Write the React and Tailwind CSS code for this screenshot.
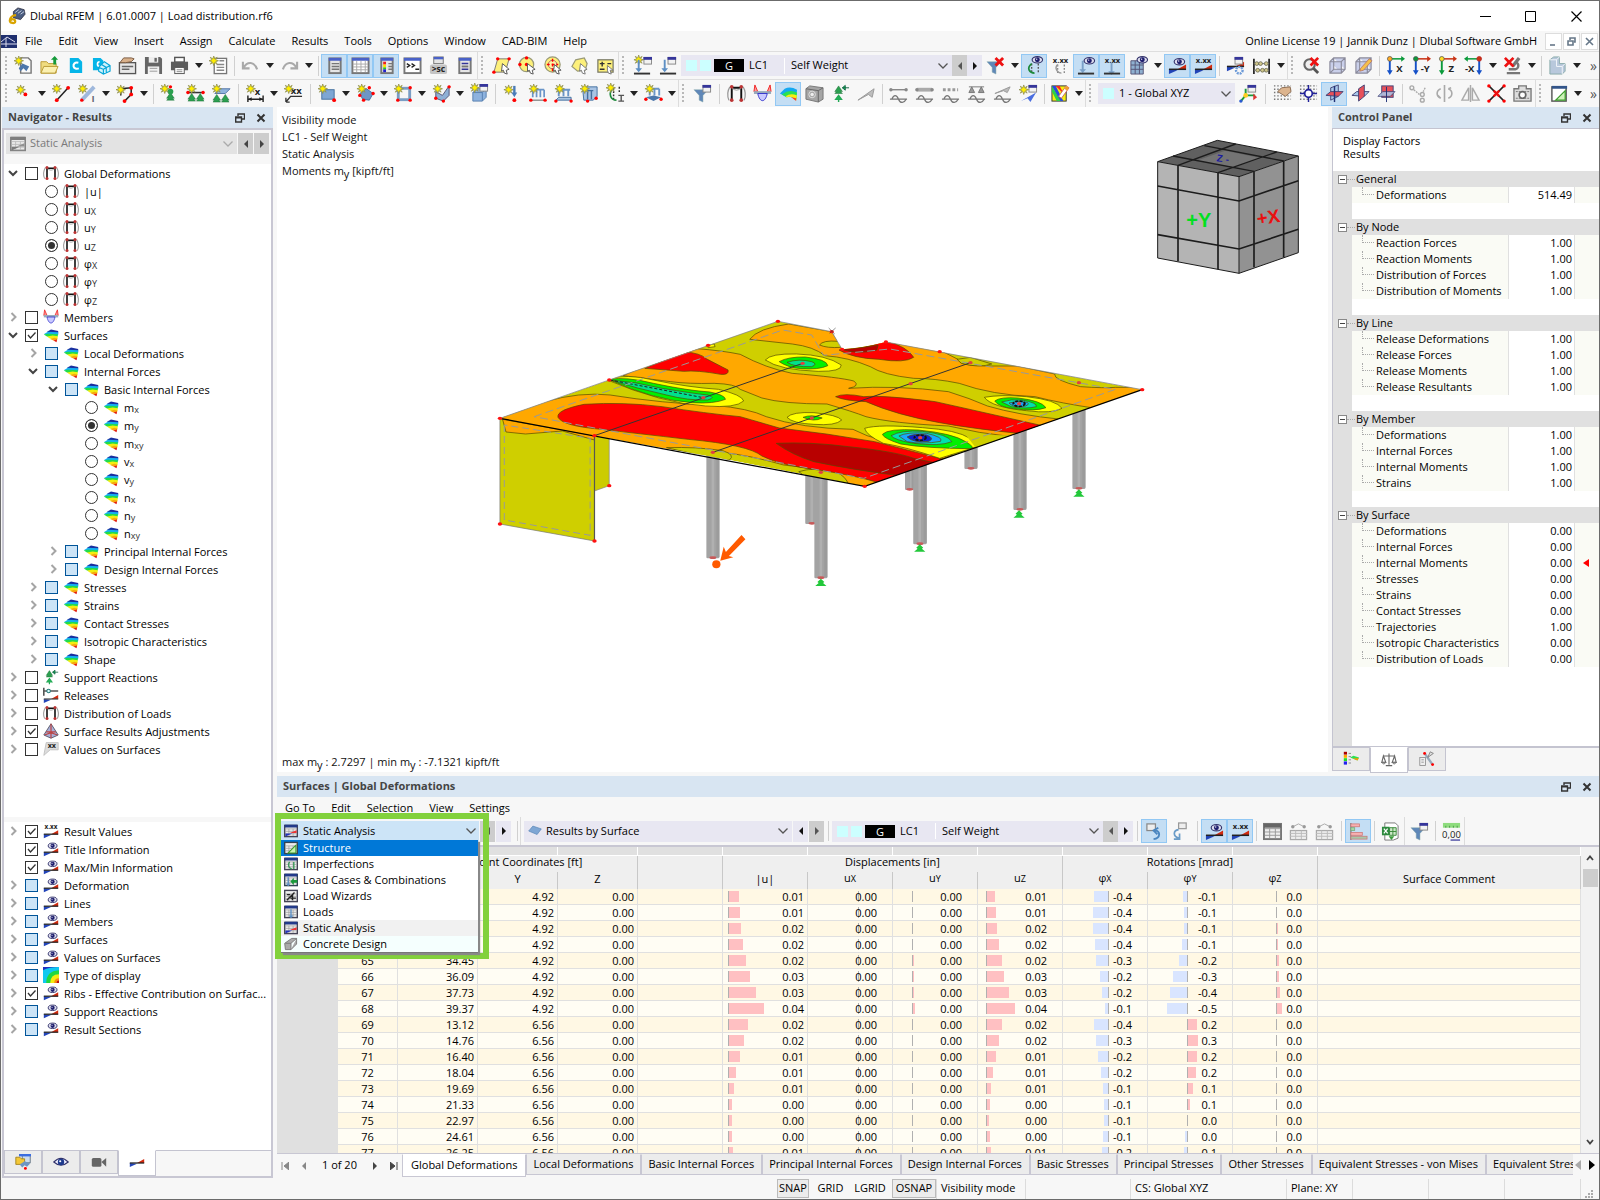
import React from "react";

/* ---------- small drawing parts shared by the icons ---------- */
const Star = ({ x = 5, y = 5 }) => (
  <path
    transform={`translate(${x} ${y})`}
    d="M0-5 1-2 3.6-3.6 2-1 5 0 2 1 3.6 3.6 1 2 0 5-1 2-3.6 3.6-2 1-5 0-2-1-3.6-3.6-1-2Z"
    fill="#ffee00"
    stroke="#8a8a55"
    strokeWidth=".8"
  />
);
const Dot = ({ x, y, c = "#f00", r = 1.8 }) => <circle cx={x} cy={y} r={r} fill={c} />;
const Win = ({ x = 10, y = 1 }) => (
  <g transform={`translate(${x} ${y})`}>
    <rect x=".5" y=".5" width="8" height="7" fill="#f2f2f2" stroke="#888" />
    <rect width="9" height="3" fill="#35359a" />
  </g>
);
const Eye = ({ x = 13, y = 4 }) => (
  <g transform={`translate(${x} ${y})`}>
    <ellipse rx="5.5" ry="3.4" fill="#dde" stroke="#33336b" strokeWidth="1.2" />
    <circle r="2.6" fill="#1e1e6e" />
    <circle cx="-.7" cy="-.7" r=".7" fill="#fff" />
  </g>
);
const Flow = ({ y = 14 }) => (
  <g transform={`translate(0 ${y})`}>
    <path d="M1 0V5L10 1Z" fill="#2244b8" />
    <path d="M19 0V-5L10 0Z" fill="#d22a0e" />
    <path d="M1 0H19" stroke="#222" strokeWidth="1.6" />
  </g>
);
const XX = ({ t = "x.xx", x = 10, y = 7, c = "#222", s = 8 }) => (
  <text x={x} y={y} textAnchor="middle" fontSize={s} fontWeight="bold" fill={c} fontFamily="Open Sans, sans-serif">{t}</text>
);
const Curve = ({ c = "#777" }) => <path d="M1 16H19M3 16C5 11 8 11 10 16S16 20 18 16" fill="none" stroke={c} strokeWidth="1.4" />;
const Dots = ({ c = "#777" }) => (
  <path d="M1 2H19M1 5.5H19M1 9H19M1 12.500H19M1 16H19" stroke={c} strokeWidth="1.5" strokeDasharray="1.5 2" />
);
const Funnel = ({ c = "#5f87b8" }) => <path d="M1 6H16L10.500 12V19L6.500 17V12Z" fill={c} stroke="#8aa" strokeWidth=".5" />;
const Down = ({ x = 7, c = "#5d8fc4", y = 0 }) => <path d={`M${x - 1} ${y + 3}h2v9h2.500l-3.500 4-3.500-4h2.500Z`} fill={c} />;
const Green = ({ x, y }) => <path d={`M${x} ${y}l4 6h-2l2 2h-8l2-2h-2Z`} fill="#2ba04f" stroke="#156b30" strokeWidth=".5" />;
const Axes = ({ c, a, b, l, flip }) => (
  <>
    <path d={flip ? "M16 3H3" : "M4 3H17"} stroke={a} strokeWidth="1.6" />
    <path d={flip ? "M0 3l4-3v6Z" : "M20 3l-4-3v6Z"} fill={a} />
    <path d={flip ? "M16 3V16" : "M4 3V16"} stroke={b} strokeWidth="2" />
    <path d={flip ? "M16 20l-3-5h6Z" : "M4 20l-3-5h6Z"} fill={b} />
    <circle cx={flip ? 16 : 4} cy="3" r="2.500" fill={c} stroke={flip ? "#b22" : "#555"} strokeWidth=".8" />
    <XX t={l} x={flip ? 6 : 14} y={17} s={10} />
  </>
);
const Cube = ({ f = "#c9cfea" }) => (
  <path d="M2 6 6 2H18V14L14 18H2ZM2 6H14V18M14 6 18 2M6 2V14H18M6 14 2 18" fill={f} stroke="#8a8a9a" strokeWidth="1.2" />
);
const Grid = ({ c = "#777", children }) => (
  <>
    <rect x="1" y="2" width="18" height="16" fill="#eee" stroke={c} strokeWidth="2" />
    <path d="M2 7H18M2 10.500H18M2 14H18M7 7V17M13 7V17" stroke="#999" />
    {children}
  </>
);

/* rainbow surface strip used all over the results tree */
const Rainbow = () => (
  <>
    <path d="M5 6 10 3 19 5V8L10 8Z" fill="#1a2fa0" />
    <path d="M1 9 6 6 19 6.500V10L10 11Z" fill="#14b0f0" />
    <path d="M1 9.500 6 8.500 18.500 9V12L10 13.500 5 12Z" fill="#22dc4a" />
    <path d="M5 12 12 10.500 18.500 11.500 18 15 12 15.500 8 14Z" fill="#f2ee10" />
    <path d="M9 15 14 13.500 18 14.500 17.500 17 13 17Z" fill="#f8a810" />
    <path d="M13 17 17.500 15.500 17 19Z" fill="#e21a10" />
  </>
);
const Frame = () => (
  <>
    <path d="M3 3C0 8 0 12 2 17M17 3C20 8 20 12 18 17" fill="none" stroke="#999" strokeWidth="1.3" />
    <path d="M5 17V4H15V17" fill="none" stroke="#111" strokeWidth="2" />
    <path d="M5 4Q10 9 15 4" fill="none" stroke="#999" />
    <Dot x={5} y={3} r={1.900} c="#b33" /><Dot x={15} y={3} r={1.900} c="#b33" /><Dot x={5} y={17} r={1.900} c="#b33" /><Dot x={15} y={17} r={1.900} c="#b33" />
  </>
);
const Memb = () => (
  <>
    <path d="M1 8 2 1 5 8ZM19 8 18 1 15 8Z" fill="#f99" stroke="#e22" />
    <path d="M1 9H19" stroke="#9ab" strokeWidth="3" />
    <path d="M5 10C7 20 13 20 15 10Z" fill="#c9c9ff" stroke="#33c" />
  </>
);
const Support = () => (
  <>
    <Green x={8} y={2} />
    <path d="M12 4h7M12 4l3-2.500v5Z" fill="#2c6" stroke="#164" strokeWidth="1" />
    <path d="M8 19V14M8 12l-3 4h6Z" fill="#2c6" stroke="#2a5" strokeWidth="1.5" />
  </>
);

const ICONS = {
  logo: (<><path d="M6 5 11 1 18 3 19 8 14 14 6 12Z" fill="#4b5d80" stroke="#223" strokeWidth=".8" /><path d="M8 6 12 3M11 7 15 4M14 8 18 5" stroke="#cdd8ea" /><path d="M9 9C5 9 2 12 2 15S8 19 8 16 4 13 3 15" fill="none" stroke="#d9a400" strokeWidth="2.500" /></>),
  new: (<><path d="M7 2H15L18 5V18H7Z" fill="#fafafa" stroke="#777" strokeWidth="1.5" /><Star x={5} y={5} /><path d="M5 13 9 8 16 11 13 16 10 13 7 16Z" fill="#4b76ab" /></>),
  open: (<><path d="M1 6H7L9 8H17V18H1Z" fill="#f0dc80" stroke="#b99a35" /><path d="M1 18 4 11H19L16 18Z" fill="#fbf0b0" stroke="#b99a35" /><path d="M14 9V4H11.500L15.500 0 19 4H17V9Z" fill="#149a3a" /></>),
  cblue: (<><path d="M4 2H13L17 6V18H4Z" fill="#05b5e8" /><path d="M13 7C9 6 7.500 9 8 11S11 14 13.500 13" fill="none" stroke="#fff" strokeWidth="2.200" /></>),
  ccube: (<><path d="M1 2H9L12 5V15H1Z" fill="#05b5e8" /><path d="M8 6C5 6 5 11 8 11" fill="none" stroke="#fff" strokeWidth="1.700" /><path d="M7 12 13 6 19 10V16L12 19 7 16ZM7 12 12 14V19M12 14 19 10M10 9 15 12V18" fill="#cff3fc" stroke="#05a5d8" strokeWidth="1.200" /></>),
  inbox: (<><rect x="1.500" y="7" width="17" height="11.500" fill="#e8e8e8" stroke="#555" strokeWidth="1.400" /><path d="M4 11H16M4 14H12" stroke="#666" strokeWidth="1.500" /><path d="M2 7 6 2H14L17 3 14 6 8 7Z" fill="#d8b08a" stroke="#7a5a40" /></>),
  save: (<><path d="M1 1H17L19 3V19H1Z" fill="#666" /><rect x="5" y="1" width="10" height="6" fill="#eee" /><rect x="11" y="2" width="2.500" height="4" fill="#666" /><rect x="4" y="11" width="12" height="8" fill="#f3f3f3" /><path d="M6 13H14M6 16H14" stroke="#999" /></>),
  print: (<><rect x="5" y="1.500" width="10" height="5" fill="#fff" stroke="#555" strokeWidth="1.500" /><rect x="1" y="6" width="18" height="9" fill="#5c5c5c" /><rect x="5" y="12" width="10" height="6.500" fill="#fff" stroke="#555" /><path d="M7 14.500H13M7 16.500H13" stroke="#888" /></>),
  report: (<><rect x="5.500" y="2.500" width="13" height="16" fill="#fff" stroke="#777" strokeWidth="1.400" /><path d="M8 9H16M8 12H16M8 15H16M11 5H16" stroke="#888" strokeWidth="1.500" /><Star x={5} y={5} /></>),
  undo: <path d="M2 6V13H9M2.500 12.500C7 5 14 6 17 14" fill="none" stroke="#a9a9a9" strokeWidth="2.200" />,
  redo: <path d="M18 6V13H11M17.500 12.500C13 5 6 6 3 14" fill="none" stroke="#a9a9a9" strokeWidth="2.200" />,
  panA: (<><rect x="4.500" y="2.500" width="12" height="15.500" fill="#e5e5e5" stroke="#777" strokeWidth="2" /><rect x="4" y="2" width="13" height="3" fill="#4a62c8" /><path d="M7 8H15M7 11H15M7 14H15" stroke="#777" strokeWidth="1.500" /></>),
  panB: (<><rect x="1.500" y="2.500" width="17" height="15.500" fill="#fff" stroke="#777" strokeWidth="2" /><rect x="1" y="2" width="18" height="3" fill="#4a62c8" /><path d="M2 8.500H18M2 11.500H18M2 14.500H18M6 5V17M10.500 5V17M15 5V17" stroke="#aaa" /></>),
  panC: (<><rect x="4.500" y="2.500" width="12" height="15.500" fill="#e5e5e5" stroke="#777" strokeWidth="2" /><rect x="4" y="2" width="13" height="3" fill="#4a62c8" /><path d="M8 6V9" stroke="#e22" strokeWidth="3" /><path d="M8 9V12" stroke="#fd0" strokeWidth="3" /><path d="M8 12V14" stroke="#2c2" strokeWidth="3" /><path d="M8 14V17" stroke="#22c" strokeWidth="3" /><path d="M12 8H16M12 11H16M12 14H16" stroke="#777" strokeWidth="1.500" /></>),
  cons: (<><rect x="1.500" y="2.500" width="17" height="15.500" fill="#fff" stroke="#777" strokeWidth="2" /><rect x="1" y="2" width="18" height="3" fill="#4a62c8" /><path d="M4 8 7 10 4 12M9 8 12 10 9 12M13 14H17" fill="none" stroke="#222" strokeWidth="1.500" /></>),
  sc: (<><rect x="5" y="1" width="10" height="7" fill="#e5e5e5" stroke="#777" /><rect x="5" y="1" width="10" height="2.500" fill="#4a62c8" /><rect x="1" y="9" width="18" height="10" rx="2" fill="#c4c4c4" /><XX t=">sc" y={17} s={9} /></>),
  panD: (<><rect x="4.500" y="2.500" width="12" height="15.500" fill="#e5e5e5" stroke="#777" strokeWidth="2" /><rect x="4" y="2" width="13" height="3" fill="#4a62c8" /><path d="M7 8H14M7 14H14" stroke="#35359a" strokeWidth="1.600" /><path d="M7 11H14" stroke="#777" strokeWidth="2" /></>),
  selA: (<><path d="M2 17 6 3H18L14 17Z" fill="#fdf07a" stroke="#777" /><Dot x={2} y={17} /><Dot x={6} y={3} /><Dot x={18} y={3} /><path d="M11 8 18 14 15 15 16 19 13 18 12 15 10 16Z" fill="#fff" stroke="#555" /></>),
  selB: (<><circle cx="9" cy="9" r="7.500" fill="#fdf07a" stroke="#997" strokeWidth="1.300" /><Dot x={9} y={2} /><Dot x={2} y={9} /><Dot x={9} y={9} /><path d="M10 8 18 14 15 15 16 19 13 18 12 15 10 16Z" fill="#fff" stroke="#555" /></>),
  selC: (<><circle cx="9" cy="9" r="8" fill="#fdf07a" stroke="#997" strokeWidth="1.300" /><circle cx="9" cy="9" r="4.500" fill="#fff6a8" stroke="#a66" /><path d="M9 3V16M3 9H15" stroke="#f00" strokeWidth="1.500" strokeDasharray="3 2" /><path d="M11 9 18 15 15 15 16 19 13 18 12 15 10 16Z" fill="#fff" stroke="#555" /></>),
  selD: (<><path d="M2 11 6 4 15 2 18 8 16 15 8 16Z" fill="#fdf07a" stroke="#997" strokeWidth="1.300" /><path d="M11 8 18 14 15 15 16 19 13 18 12 15 10 16Z" fill="#fff" stroke="#777" /></>),
  selE: (<><rect x="2" y="4" width="16" height="13" fill="#fdf07a" stroke="#776" strokeWidth="1.300" /><path d="M4 8H9M6.500 6V11M4 14H9M12 8H16" stroke="#333" strokeWidth="1.500" /><path d="M12 10 18 15 15 15 16 19 13 18 12 15Z" fill="#fff" stroke="#777" /></>),
  ldA: (<><Star x={6} y={4} /><Win x={11} y={1} /><Down x={6} y={1} /><path d="M1 18.500H18" stroke="#333" strokeWidth="2" /></>),
  ldB: (<><Win x={9} y={1} /><Down x={6} y={1} /><path d="M1 18.500H18" stroke="#333" strokeWidth="2" /></>),
  filtX: (<><Funnel /><path d="M10 2 18 10M18 2 10 10" stroke="#e11" strokeWidth="3" /></>),
  rsEye: (<><path d="M7 8V18M14 8V18" stroke="#555" strokeWidth="1.400" strokeDasharray="2 1.500" /><path d="M7 8C1 13 5 18 10 18" fill="none" stroke="#1c8a3a" strokeWidth="1.800" /><Eye /></>),
  rsX: (<><XX /><path d="M7 9V19M14 9V19" stroke="#888" strokeWidth="1.400" strokeDasharray="2 1.500" /><path d="M7 9C3 13 7 18 11 18" fill="none" stroke="#999" strokeWidth="1.500" /></>),
  dnEye: (<><Down x={6} y={2} c="#7aa0c8" /><path d="M1 18.500H18" stroke="#333" strokeWidth="2" /><Eye x={13} y={5} /></>),
  dnX: (<><XX /><Down x={9} y={4} c="#7aa0c8" /><path d="M1 18.500H18" stroke="#333" strokeWidth="2" /></>),
  gridEye: (<><path d="M2 5H15V19H2ZM2 9.500H15M2 14H15M6.500 5V19M11 5V19" fill="#8fb0d0" stroke="#557" /><Eye x={14} y={4} /></>),
  resEye: (<><Eye x={12} y={6} /><Flow y={14} /></>),
  resX: (<><XX /><Flow y={14} /></>),
  resWin: (<><Flow y={11} /><Win x={9} y={1} /><circle cx="14" cy="15" r="3.500" fill="none" stroke="#6d9bd8" strokeWidth="2.500" strokeDasharray="2 1" /></>),
  abacus: (<><path d="M2 3V19M18 3V19" stroke="#222" strokeWidth="1.800" /><path d="M2 8H18M2 15H18" stroke="#777" /><g fill="#cfc68a" stroke="#554" strokeWidth=".7"><circle cx="5" cy="8" r="2" /><circle cx="9" cy="8" r="2" /><circle cx="15" cy="8" r="2" /><circle cx="6" cy="15" r="2" /><circle cx="11" cy="15" r="2" /><circle cx="15" cy="15" r="2" /></g></>),
  zoomX: (<><circle cx="8" cy="9" r="5.500" fill="#eee" stroke="#666" strokeWidth="2.200" /><path d="M12 13 17 18" stroke="#555" strokeWidth="3" /><path d="M9 2 17 10M17 2 9 10" stroke="#e11" strokeWidth="2.800" /></>),
  cube: <Cube />,
  cubeP: (<><Cube /><path d="M7 13 16 3 19 5 10 15 6 16Z" fill="#f5c04a" stroke="#a66" strokeWidth=".7" /></>),
  axX: <Axes c="#fa2" a="#0a9a3a" b="#1450c8" l="X" />,
  axY: <Axes c="#0a9a3a" a="#c83214" b="#1450c8" l="-Y" />,
  axZ: <Axes c="#fd2" a="#c83214" b="#0a9a3a" l="Z" />,
  axmX: <Axes c="#c83214" a="#0a9a3a" b="#1450c8" l="-X" flip />,
  micX: (<><path d="M4 18H18M6 14H13C17 13 17 8 14 7" fill="none" stroke="#777" strokeWidth="2.500" /><path d="M10 11 17 2" stroke="#777" strokeWidth="3.500" /><path d="M2 2 11 11M11 2 2 11" stroke="#e11" strokeWidth="2.800" /></>),
  steps: (<><path d="M2 4 6 1H12V8H18V16L15 19H2Z" fill="#b8c8dc" stroke="#8aa" /><path d="M2 4H9V11H15V19M9 4 12 1M15 11 18 8" fill="none" stroke="#f3f7fb" /></>),
  nNode: (<><Star x={7} y={6} /><Dot x={12} y={11} r={2} /></>),
  nLine: (<><path d="M5 17 17 4" stroke="#222" strokeWidth="1.600" /><Star x={5} y={5} /><Dot x={5} y={17} r={2} /><Dot x={17} y={4} r={2} /></>),
  nMem: (<><path d="M4 17 17 3" stroke="#9fb8dc" strokeWidth="4" /><Star x={5} y={5} /><Dot x={4} y={17} /><XX t="I" x={16} y={19} s={10} c="#667" /></>),
  nPoly: (<><path d="M5 12 5 5 16 4 16 11 9 18" fill="none" stroke="#222" strokeWidth="1.600" /><Star x={5} y={6} /><Dot x={16} y={4} r={2} /><Dot x={16} y={11} r={2} /><Dot x={9} y={18} r={2} /></>),
  nSup: (<><Green x={11} y={9} /><circle cx="11" cy="8" r="3" fill="#2ba04f" /><Star x={5} y={5} /><Dot x={11} y={3} /></>),
  nSupL: (<><path d="M3 9H18" stroke="#333" strokeWidth="1.600" /><Green x={6} y={10} /><Green x={15} y={10} /><Star x={6} y={5} /><Dot x={2} y={9} /><Dot x={18} y={9} /></>),
  nSupS: (<><path d="M3 10 8 5H19L14 10Z" fill="#8fb4dc" stroke="#57a" /><Green x={5} y={11} /><Green x={14} y={11} /><Star x={5} y={5} /></>),
  nDim: (<><path d="M2 12V19M18 12V19M2 16H18" stroke="#222" strokeWidth="1.500" /><path d="M2 16l4-2v4ZM18 16l-4-2v4Z" fill="#222" /><XX t="x" x={12} y={12} s={10} /><Star x={5} y={5} /></>),
  nXX: (<><XX t="xx" x={13} y={11} s={10} /><path d="M19 13H7L2 19M2 19V14.500M2 19H6" fill="none" stroke="#333" strokeWidth="1.400" /><Star x={5} y={5} /></>),
  nSurf: (<><rect x="4" y="6" width="13" height="10" fill="#7ea6d4" stroke="#46719f" /><Star x={5} y={5} /><Dot x={17} y={17} r={2} /></>),
  nSurfB: (<><path d="M4 10 11 5 18 10 14 17 7 16Z" fill="#6d96c4" stroke="#46719f" /><Star x={6} y={5} /><Dot x={18} y={10} /><Dot x={8} y={17} /><Dot x={14} y={4} /><Dot x={4} y={12} /></>),
  nOpen: (<><rect x="4.500" y="4.500" width="12" height="12" fill="none" stroke="#7a9dc4" strokeWidth="3" /><Star x={5} y={5} /><Dot x={17} y={4} /><Dot x={17} y={17} /><Dot x={4} y={17} /></>),
  nSolid: (<><path d="M4 8 11 12 18 2V12L12 18 4 15Z" fill="#8fb0d6" stroke="#557" /><Star x={6} y={5} /><Dot x={18} y={3} /><Dot x={12} y={18} /><Dot x={4} y={15} /></>),
  nBox: (<><path d="M3 9 7 5H17V14L13 18H3ZM3 9H13V18M13 9 17 5" fill="#8db2de" stroke="#567fb0" /><Star x={5} y={4} /><Win x={10} y={0} /></>),
  nLdN: (<><Star x={7} y={6} /><path d="M13 2V10" stroke="#4a7cb8" strokeWidth="2.500" /><path d="M13 14l-3-5h6Z" fill="#4a7cb8" /><Dot x={13} y={17} r={2} /></>),
  nLdL: (<><path d="M4 6H17M5 6V14M9 6V14M13 6V14M17 6V14" stroke="#6a95c8" strokeWidth="1.800" /><path d="M3 17H18" stroke="#555" /><Star x={6} y={5} /><Dot x={3} y={17} /><Dot x={18} y={17} /></>),
  nLdS: (<><path d="M3 6H17M5 6V13M10 6V13M15 6V13" stroke="#6a95c8" strokeWidth="2" /><path d="M2 17 5 14H18V17Z" fill="#a9c4e4" stroke="#46719f" /><Star x={6} y={5} /><Dot x={2} y={18} /><Dot x={18} y={18} /></>),
  nLdV: (<><path d="M3 7 8 3H18V13L14 17H4Z" fill="#a9c4e4" stroke="#46719f" /><path d="M8 7V16M12 7V16M3 7H14" stroke="#46719f" strokeWidth="1.500" /><Star x={5} y={5} /><Dot x={8} y={18} /><Dot x={17} y={15} /></>),
  nImp: (<><path d="M8 4V17M14 3V10" stroke="#333" strokeWidth="1.500" strokeDasharray="2 1.500" /><path d="M7 5C2 10 5 17 11 17" fill="none" stroke="#1c8a3a" strokeWidth="1.800" /><Star x={5} y={4} /><path d="M13 12H19M13 18H19M16 12V18" stroke="#555" strokeWidth="1.500" /></>),
  nLdF: (<><path d="M5 5H16M6 5V12M11 5V12M16 5V12" stroke="#6a95c8" strokeWidth="2" /><path d="M2 14 10 12 18 14 10 18Z" fill="#4b76ab" /><Star x={6} y={5} /><Dot x={2} y={16} /><Dot x={18} y={16} /></>),
  filtW: (<><Funnel /><Win x={10} y={1} /></>),
  frame: <Frame />,
  memb: <Memb />,
  rain: <Rainbow />,
  rainB: (<><path d="M1 10 6 5Q12 2 19 6L18 16Q13 12 8 14Z" fill="#14a8f0" /><path d="M3 11Q11 5 19 9L18 17Q13 12 8 14Z" fill="#2be052" /><path d="M7 13Q12 9 19 12L18 17Q13 12 8 14Z" fill="#f6ee10" /><path d="M13 14 18 15V18Z" fill="#f42" /></>),
  brick: (<><path d="M1 5 5 2 19 4V16L14 19 1 16Z" fill="#a5a5a5" stroke="#777" /><path d="M1 5 14 7V19M14 7 19 4" stroke="#666" fill="none" /><circle cx="7.500" cy="11" r="3.500" fill="none" stroke="#ddd" /><Dot x={7.500} y={11} c="#eee" /></>),
  sup: <Support />,
  wing: (<path d="M1 17 18 5 16 14 12 11Z" fill="#bdbdbd" stroke="#999" />),
  cvA: (<><path d="M2 6H18" stroke="#888" strokeWidth="1.500" /><Dot x={2} y={6} c="#888" /><Dot x={18} y={6} c="#888" /><Curve /></>),
  cvB: (<><path d="M2 6H18" stroke="#aaa" strokeWidth="4" /><Dot x={2} y={6} c="#888" /><Dot x={18} y={6} c="#888" /><Curve /></>),
  cvC: (<><path d="M2 6H18" stroke="#999" strokeWidth="3" strokeDasharray="3 2" /><Curve /></>),
  cvD: (<><path d="M2 3H18M5 3 2 9H8ZM15 3 12 9H18Z" stroke="#777" fill="#999" /><Curve /></>),
  cvE: (<><path d="M2 10 18 3 15 9 11 7Z" fill="#bbb" stroke="#999" /><Curve /></>),
  cvF: (<><Win x={10} y={1} /><path d="M2 18 18 9 12 19 9 15Z" fill="#4a6ee0" /><Star x={5} y={6} /></>),
  color: (<><rect x="1" y="2" width="15" height="16" fill="#f6ee10" stroke="#333" /><path d="M1 2H5L13 18H9Z" fill="#2b4ae0" /><path d="M1 2V8L6 18H10Z" fill="#2ad04a" /><path d="M5 2H9L14 11 9 6Z" fill="#f22" /><path d="M8 13 16 2 19 4 11 15Z" fill="#fff" stroke="#c66" /><path d="M16 2 19 4 17 7 14 5Z" fill="#f0a030" /></>),
  ucs: (<><Win x={9} y={1} /><path d="M7 12V5M7 12H17M7 12 2 18" stroke="#1a9a3a" strokeWidth="2" fill="none" /><path d="M19 14l-4-4v7Z" fill="#d33" /><Dot x={7} y={12} c="#fc2" r={2.500} /><Dot x={2} y={18} c="#2a5ad0" /></>),
  snapH: (<><Dots /><path d="M5 8 9 4 18 3 19 8 13 13Z" fill="#dcb48e" stroke="#8a6a50" /></>),
  snapG: (<><Dots /><path d="M10 1V19M1 10H19" stroke="#22229a" strokeWidth="1.500" /><circle cx="10" cy="10" r="4" fill="#fff" stroke="#22229a" strokeWidth="1.800" /></>),
  plA: (<><path d="M6 4 14 1V13L6 17Z" fill="#a9c8ea" stroke="#447" /><path d="M1 12 6 8H19L14 13Z" fill="#e8505a" stroke="#447" /><path d="M10 2V19" stroke="#237" strokeWidth="1.500" /></>),
  plB: (<><path d="M1 12 6 8H19L14 13Z" fill="#a9c8ea" stroke="#447" /><path d="M8 5 14 1V13L8 18Z" fill="#e8505a" stroke="#447" /></>),
  plC: (<><rect x="5" y="2" width="12" height="12" fill="#e8505a" stroke="#447" /><path d="M1 13 6 8H19L14 13Z" fill="#a9c8ea" stroke="#447" opacity=".85" /><path d="M10 3V19" stroke="#237" /></>),
  nodes: (<><g fill="none" stroke="#aaa" strokeWidth="1.500"><circle cx="3" cy="4" r="2" /><circle cx="14" cy="11" r="2" /><circle cx="14" cy="17" r="2" /><path d="M5 6 11 11M17 4 15 8" strokeDasharray="2 1" /></g></>),
  rot: <path d="M10 1V19M6 5C1 7 1 13 6 15M14 5C19 7 19 13 14 15M6 15l-3-3M14 5l3-1" fill="none" stroke="#aaa" strokeWidth="1.700" />,
  mirror: <path d="M10 1V19M8 4V17H1ZM12 4V17H19Z" fill="none" stroke="#aaa" strokeWidth="1.500" />,
  cross: (<><path d="M2 2 18 18M18 2 2 18" stroke="#222" strokeWidth="1.600" /><Dot x={2} y={2} /><Dot x={18} y={2} /><Dot x={2} y={18} /><Dot x={18} y={18} /><path d="M7 7 13 13M13 7 7 13" stroke="#e11" strokeWidth="2.500" /></>),
  cam: (<><path d="M1 5H6V2H14V5H19V18H1Z" fill="#ddd" stroke="#777" strokeWidth="1.400" /><path d="M3 8H17M3 15H17" stroke="#777" strokeDasharray="2 1" /><circle cx="10" cy="11.500" r="3.500" fill="#fff" stroke="#666" strokeWidth="1.800" /></>),
  tri: (<><rect x="2" y="3" width="15" height="15" fill="#fff" stroke="#555" strokeWidth="1.500" /><rect x="2" y="2" width="16" height="3" fill="#33558a" /><path d="M6 17 16 7V17Z" fill="#cdf3b8" stroke="#3a9a2a" strokeWidth="1.300" /></>),
  /* tree and tab icons */
  rel: (<><path d="M1 1V11M1 5H19" stroke="#555" strokeWidth="2" /><circle cx="7" cy="5" r="2.200" fill="#dff" stroke="#277" strokeWidth="1.300" /><path d="M1 15V20L10 16Z" fill="#2244b8" /><path d="M19 15V10L10 15Z" fill="#d22a0e" /><path d="M1 15H19" stroke="#444" strokeWidth="1.500" /></>),
  adj: (<><path d="M10 1 19 15 10 19 1 15Z" fill="#a9b0d8" stroke="#445" /><path d="M10 1V19M4 11H16M2 15 10 12 18 15" stroke="#b44" fill="none" strokeWidth="1.500" /></>),
  valS: (<><path d="M4 2H19V11H9L1 18Z" fill="#ddd" stroke="#bbb" /><XX t="xx" x={11} y={9} s={9} /></>),
  type: (<><rect width="20" height="20" fill="#2030c0" /><path d="M0 20V4Q8 0 20 0V20Z" fill="#10c8f0" /><path d="M4 20Q4 5 20 4V20Z" fill="#20d840" /><path d="M9 20Q9 9 20 9V20Z" fill="#f4ec10" /><path d="M14 20Q14 14 20 14V20Z" fill="#fa8a10" /><path d="M17 20Q17 17 20 17V20Z" fill="#c01010" /></>),
  tbl: <Grid><rect x="1" y="2" width="18" height="4" fill="#666" /></Grid>,
  tblN: <><rect x="1.500" y="9" width="17" height="9.500" fill="#eee" stroke="#aaa" strokeWidth="1.300" /><path d="M1 12H19M1 15H19M7 9V18M13 9V18" stroke="#bbb" /><path d="M4 5 10 2 16 5" stroke="#aaa" fill="none" /><Dot x={4} y={5} c="#999" /><Dot x={16} y={5} c="#999" /></>,
  bars: (<><path d="M2 1V19" stroke="#777" strokeWidth="1.300" /><g strokeWidth=".8"><rect x="2" y="2" width="9" height="3" fill="#f8b0b0" stroke="#c77" /><rect x="2" y="6" width="4" height="3" fill="#a8d8a8" stroke="#7a7" /><rect x="2" y="11" width="12" height="3" fill="#f8b0b0" stroke="#c77" /><rect x="2" y="15" width="17" height="3" fill="#a8c8a8" stroke="#c77" /></g></>),
  xls: (<><path d="M4 1H15L18 4V17L13 19H4Z" fill="#fff" stroke="#777" /><path d="M9 6H16V14H9ZM9 10H16M12.500 6V14" fill="#cde8c8" stroke="#3a8a3a" /><rect x="1" y="5" width="8" height="9" fill="#2d8a3e" /><path d="M3 7 7 12M7 7 3 12" stroke="#fff" strokeWidth="1.300" /><path d="M8 15H14L11 19Z" fill="#3a9a3a" /></>),
  dec: (<><rect x="1" y="1" width="18" height="5" fill="#8edc7e" /><path d="M4 4V6M8 4V6M12 4V6M16 4V6" stroke="#4a9a4a" /><text x="10" y="17" textAnchor="middle" fontSize="10" fill="#222" fontFamily="Open Sans">0,00</text><path d="M9 19H19" stroke="#35359a" strokeWidth="1.300" /></>),
  jumpA: (<><rect x="2" y="2" width="9" height="7" fill="#eee" stroke="#888" strokeWidth="1.300" /><path d="M9 18C17 17 16 9 11 9M14 6 9 9 13 13" fill="none" stroke="#4a86c0" strokeWidth="2" /></>),
  jumpB: (<><rect x="8" y="1" width="8" height="6" fill="#eee" stroke="#999" strokeWidth="1.300" /><path d="M8 8C2 9 2 15 8 17M3 18H9V12" fill="none" stroke="#6a9cc8" strokeWidth="1.800" /></>),
  proj: (<><rect x="9" y="1" width="10" height="10" fill="#cde" stroke="#567" /><rect x="5" y="0" width="15" height="3" fill="#3b6de0" /><path d="M1 4H6L8 6H12V13H1Z" fill="#f4c838" stroke="#9a7a10" /><path d="M6 13 12 9 19 12 15 16 12 14 9 17Z" fill="#6d96c4" /><Dot x={13} y={18} /></>),
  eye: (<><path d="M1 10Q10 1 19 10Q10 18 1 10Z" fill="#eef" stroke="#33336b" strokeWidth="1.400" /><circle cx="10" cy="10" r="4" fill="#1e3a8e" /><circle cx="9" cy="9" r="1.300" fill="#fff" /></>),
  video: (<><rect x="1" y="5" width="12" height="11" rx="2" fill="#666" /><path d="M13 10 19 5V16Z" fill="#666" /></>),
  flow: <Flow y={10} />,
  legend: (<><path d="M3 1V4.500" stroke="#a00" strokeWidth="4" /><path d="M3 5V8.500" stroke="#fa0" strokeWidth="4" /><path d="M3 9V12.500" stroke="#2d2" strokeWidth="4" /><path d="M3 13V17" stroke="#22e" strokeWidth="4" /><path d="M7 3H10M7 7H10M7 11H10M7 15H10" stroke="#777" /><path d="M9 8 13 6 20 8 18 12Z" fill="#2be052" /><path d="M12 9 20 9 18 12Z" fill="#f90" /></>),
  scale: (<><path d="M10 2V16M6 17H14M3 5H17M3 5 1 13H6ZM17 5 14 13H19Z" fill="none" stroke="#666" strokeWidth="1.400" /><path d="M1 13Q3.500 17 6 13ZM14 13Q16.500 17 19 13Z" fill="#ddd" stroke="#666" /></>),
  probe: (<><rect x="1" y="8" width="7" height="10" fill="#eee" stroke="#888" /><path d="M3 11H6M3 14H6" stroke="#888" /><path d="M7 3 17 17" stroke="#9ab" strokeWidth="3" /><Dot x={7} y={3} /><Dot x={17} y={17} /><path d="M11 8 18 3 14 1Z" fill="#ddd" stroke="#777" /></>),
  surf: <path d="M1 10 7 3 19 7 13 15Z" fill="#7ea6d4" stroke="#5a86b8" />,
  dStatic: <Grid c="#445"><rect x="1" y="1" width="18" height="4" fill="#223a8a" /><path d="M2 13H18V9L8 13Z" fill="#e33" /><path d="M2 13.500H12L2 18Z" fill="#23b" /></Grid>,
  dStruct: <Grid c="#345"><path d="M6 17 17 6V17Z" fill="#c8f5b0" stroke="#3a9a2a" strokeWidth="1.500" /></Grid>,
  dImp: <Grid c="#445"><rect x="1" y="1" width="18" height="4" fill="#223a8a" /><path d="M8 7C4 12 8 16 11 17M14 7V17" fill="none" stroke="#3a9a5a" strokeWidth="2" /></Grid>,
  dCases: <Grid c="#345"><rect x="1" y="1" width="18" height="4" fill="#223a8a" /><Down x={6} y={3} /><path d="M9 12 14 7V10H19V14H14V17Z" fill="#1a9a3a" /></Grid>,
  dWiz: <Grid c="#445"><path d="M4 16 15 5M12 16V8M4 8H9M17 13H9" stroke="#222" strokeWidth="2" /></Grid>,
  dLoads: <Grid c="#445"><rect x="1" y="1" width="18" height="4" fill="#223a8a" /><Down x={10} y={3} /></Grid>,
  dConc: <path d="M1 9 11 2H18L10 9V18H2ZM10 9H2M10 18 18 10V2" fill="#aaa" stroke="#777" strokeWidth="1.300" />,
};

const Icon = ({ n, size = "size-5" }) => (
  <svg viewBox="0 0 20 20" className={`${size} shrink-0 overflow-visible`} aria-hidden="true">{ICONS[n]}</svg>
);

/* ---------- toolbar parts ---------- */
const Btn = ({ n, on }) => (
  <button type="button" aria-label={n} className={`flex h-6 w-[26px] shrink-0 items-center justify-center border ${on ? "border-[#92c8f4] bg-[#c4def4]" : "border-transparent"}`}>
    <Icon n={n} size="size-[19px]" />
  </button>
);
const Tri = () => <svg viewBox="0 0 8 5" className="h-[5px] w-2 shrink-0"><path d="M0 0H8L4 5Z" fill="#222" /></svg>;
const Arr = ({ wide }) => (
  <button type="button" aria-label="More" className={`flex h-6 shrink-0 items-center justify-center ${wide ? "w-[13px]" : "w-3"}`}><Tri /></button>
);
const Sep = ({ wide }) => (
  <span className={`flex h-5 shrink-0 justify-center ${wide ? "w-2" : "w-1.5"}`}><span className="w-px bg-[#d0d0d0]" /></span>
);
const Handle = () => <span className="mx-[3px] h-5 w-0.5 shrink-0 bg-[repeating-linear-gradient(#b8b8b8_0_2px,transparent_2px_4px)]" />;
const Group = () => (
  <span className="flex h-full w-[11px] shrink-0 items-center"><span className="h-full w-px bg-[#dcdcdc]" /><Handle /></span>
);
const Chev = ({ c = "#555" }) => (
  <svg viewBox="0 0 10 6" className="pointer-events-none h-1.5 w-2.5 shrink-0"><path d="M.5.500 5 5 9.500.500" fill="none" stroke={c} strokeWidth="1.300" /></svg>
);
const Tick = ({ dir, c = "#111" }) => (
  <svg viewBox="0 0 6 8" className="h-2 w-1.5"><path d={dir === "l" ? "M5 0V8L1 4Z" : "M1 0V8L5 4Z"} fill={c} /></svg>
);
const Step = ({ dir, gray, c }) => (
  <button type="button" aria-label={dir === "l" ? "Previous" : "Next"} className={`flex h-[21px] w-[15px] shrink-0 items-center justify-center ${gray ? "bg-[#cdcdcd]" : "bg-[#e8e7f2]"}`}><Tick dir={dir} c={c} /></button>
);
const Select = ({ label, value, className = "" }) => (
  <select aria-label={label} className={`min-w-0 flex-1 appearance-none bg-transparent outline-none ${className}`} defaultValue={value}><option>{value}</option></select>
);
const CaseCombo = () => (
  <div className="flex h-[21px] w-[271px] shrink-0 items-center bg-[#e8e7f2] pr-1">
    <span className="ml-[5px] size-[11px] bg-[#ccffff]" />
    <span className="ml-[3px] size-[11px] bg-[#ccffff]" />
    <span className="ml-[3px] flex h-[13px] w-[30px] items-center justify-center bg-black leading-[13px] text-white">G</span>
    <span className="ml-[5px] w-[35px]">LC1</span>
    <span className="h-4 w-px bg-white" />
    <Select label="Load case" value="Self Weight" className="ml-1.5" />
    <Chev />
  </div>
);

function renderItems(s, wide) {
  return s.split(" ").map((t, i) => {
    if (t === "v") return <Arr key={i} wide={wide} />;
    if (t === "|") return <Sep key={i} />;
    if (t === "||") return <Sep key={i} wide />;
    if (t === "/") return <span key={i} className="mx-px h-full w-px shrink-0 bg-[#dcdcdc]" />;
    if (t === "#") return <Group key={i} />;
    if (t === "CASE") return <React.Fragment key={i}><CaseCombo /><Step dir="l" gray c="#555" /><Step dir="r" /></React.Fragment>;
    if (t === "XYZ")
      return (
        <div key={i} className="ml-0.5 flex h-[21px] w-[137px] shrink-0 items-center bg-[#e8e7f2] pr-1">
          <span className="ml-[5px] size-[11px] bg-[#ccffff]" />
          <Select label="Coordinate system" value="1 - Global XYZ" className="ml-[5px]" />
          <Chev />
        </div>
      );
    return <Btn key={i} n={t.replace("*", "")} on={t.endsWith("*")} />;
  });
}

const MENU = ["File", "Edit", "View", "Insert", "Assign", "Calculate", "Results", "Tools", "Options", "Window", "CAD-BIM", "Help"];
const TB1 = "new open cblue ccube inbox save print v report | undo v redo v | panA* panB* panC* cons sc panD # selA selB selC selD selE # ldA ldB CASE filtX v rsEye* rsX dnEye* dnX* gridEye v resEye* resX* | resWin abacus v # zoomX cube cubeP | axX axY axZ axmX v micX v | steps v";
const TB2 = "nNode v nLine nMem v nPoly v | nSup nSupL nSupS || nDim v nXX || nSurf v nSurfB v nOpen v nSolid v nBox | nLdN nLdL nLdS nLdV nImp v nLdF v # filtW || frame memb rainB* brick sup wing | cvA cvB cvC cvD cvE cvF | color v # XYZ ucs || snapH snapG plA* plB plC | nodes rot mirror cross cam # tri v";

function Toolbar({ items, wide }) {
  return (
    <div className="flex h-7 shrink-0 items-center overflow-hidden border-t border-[#dedede]">
      <span className="w-px" />
      <Handle />
      {renderItems(items, wide)}
      <span className="ml-auto pr-0.5 text-sm leading-5 text-[#555]">»</span>
    </div>
  );
}

/* ---------- docking panel title ---------- */
const PanelTitle = ({ children }) => (
  <div className="flex h-[21px] shrink-0 items-center bg-[#d8e5f2] pl-1.5 pr-[7px] text-[#444]">
    <h2 className="flex-1 font-bold">{children}</h2>
    <button type="button" aria-label="Float" className="mr-[11px]">
      <svg viewBox="0 0 10 10" className="size-2.5"><path d="M3 3V1H9.500V6H7M.700 4H6.500V9H.700ZM.700 4.700H6.500" fill="none" stroke="#333" strokeWidth="1.400" /></svg>
    </button>
    <button type="button" aria-label="Close">
      <svg viewBox="0 0 10 10" className="size-2.5"><path d="M1.500 1.500 8.500 8.500M8.500 1.500 1.500 8.500" stroke="#333" strokeWidth="2" /></svg>
    </button>
  </div>
);

/* ---------- navigator tree ---------- */
// [level, expander, control, icon, label, subscript]
const TREE = [
  [0, "d", "c", "frame", "Global Deformations"],
  [1, "", "r", "frame", "|u|"],
  [1, "", "r", "frame", "u", "X"],
  [1, "", "r", "frame", "u", "Y"],
  [1, "", "R", "frame", "u", "Z"],
  [1, "", "r", "frame", "φ", "X"],
  [1, "", "r", "frame", "φ", "Y"],
  [1, "", "r", "frame", "φ", "Z"],
  [0, "r", "c", "memb", "Members"],
  [0, "d", "C", "rain", "Surfaces"],
  [1, "r", "b", "rain", "Local Deformations"],
  [1, "d", "b", "rain", "Internal Forces"],
  [2, "d", "b", "rain", "Basic Internal Forces"],
  [3, "", "s", "rain", "m", "x"],
  [3, "", "S", "rain", "m", "y"],
  [3, "", "s", "rain", "m", "xy"],
  [3, "", "s", "rain", "v", "x"],
  [3, "", "s", "rain", "v", "y"],
  [3, "", "s", "rain", "n", "x"],
  [3, "", "s", "rain", "n", "y"],
  [3, "", "s", "rain", "n", "xy"],
  [2, "r", "b", "rain", "Principal Internal Forces"],
  [2, "r", "b", "rain", "Design Internal Forces"],
  [1, "r", "b", "rain", "Stresses"],
  [1, "r", "b", "rain", "Strains"],
  [1, "r", "b", "rain", "Contact Stresses"],
  [1, "r", "b", "rain", "Isotropic Characteristics"],
  [1, "r", "b", "rain", "Shape"],
  [0, "r", "c", "sup", "Support Reactions"],
  [0, "r", "c", "rel", "Releases"],
  [0, "r", "c", "frame", "Distribution of Loads"],
  [0, "r", "C", "adj", "Surface Results Adjustments"],
  [0, "r", "c", "valS", "Values on Surfaces"],
];
const TREE2 = [
  [0, "r", "C", "resX", "Result Values"],
  [0, "", "C", "resEye", "Title Information"],
  [0, "", "C", "resEye", "Max/Min Information"],
  [0, "r", "b", "resEye", "Deformation"],
  [0, "r", "b", "resEye", "Lines"],
  [0, "r", "b", "resEye", "Members"],
  [0, "r", "b", "resEye", "Surfaces"],
  [0, "r", "b", "resEye", "Values on Surfaces"],
  [0, "r", "b", "type", "Type of display"],
  [0, "r", "C", "resEye", "Ribs - Effective Contribution on Surfac..."],
  [0, "r", "b", "resEye", "Support Reactions"],
  [0, "r", "b", "resEye", "Result Sections"],
];
const INDENT = ["pl-0", "pl-5", "pl-10", "pl-[60px]"];

function Control({ kind }) {
  const k = kind.toLowerCase();
  if (k === "r" || k === "s")
    return (
      <input type="radio" name={k === "r" ? "deformation" : "force"} defaultChecked={kind !== k}
        className="size-[13px] shrink-0 appearance-none rounded-full border border-[#333] bg-white checked:bg-[#333] checked:shadow-[inset_0_0_0_2px_white]" />
    );
  return (
    <span className="relative size-[13px] shrink-0">
      <input type="checkbox" defaultChecked={kind === "C"}
        className={`peer block size-[13px] appearance-none border ${k === "b" ? "border-[#005499] bg-[#cce4f7]" : "border-[#333] bg-white"}`} />
      <svg viewBox="0 0 13 13" className="pointer-events-none absolute inset-0 hidden peer-checked:block"><path d="M3 6 5.500 9 10.500 3.500" fill="none" stroke="#333" strokeWidth="1.300" /></svg>
    </span>
  );
}

const Tree = ({ rows }) => (
  <ul>
    {rows.map(([lv, ex, ctl, icon, label, sub], i) => (
      <li key={i} className={`flex h-[18px] items-center ${INDENT[lv]}`}>
        <span className="flex w-[21px] shrink-0 items-center pl-1">
          {ex === "d" && <svg viewBox="0 0 10 7" className="h-[7px] w-2.5"><path d="M1 1 5 5 9 1" fill="none" stroke="#444" strokeWidth="2" /></svg>}
          {ex === "r" && <svg viewBox="0 0 7 10" className="ml-0.5 h-2.5 w-[7px]"><path d="M1.500 1 5.500 5 1.500 9" fill="none" stroke="#a5a5a5" strokeWidth="2" /></svg>}
        </span>
        <label className="flex items-center whitespace-nowrap">
          <Control kind={ctl} />
          <span className="ml-[5px] mr-[5px] flex"><Icon n={icon} size="size-4" /></span>
          <span className="pt-0.5">{label}{sub && <span className="relative top-px text-[9px] text-[#333]">{sub}</span>}</span>
        </label>
      </li>
    ))}
  </ul>
);

const IconTabs = ({ icons, active }) => (
  <div className="flex h-[26px] shrink-0 items-start">
    {icons.map((n, i) => (
      <button key={n} type="button" aria-label={n}
        className={`flex w-[38px] items-center justify-center border border-[#c4c4d0] ${i === active ? "h-[26px] border-t-white bg-white" : "h-6 bg-[#ececec]"} ${i ? "border-l-[#c4c4d0]" : ""}`}>
        <Icon n={n} size="size-4" />
      </button>
    ))}
    <span className="h-px flex-1 bg-[#c4c4d0]" />
  </div>
);

function Navigator() {
  return (
    <aside className="flex w-[271px] shrink-0 flex-col">
      <PanelTitle>Navigator - Results</PanelTitle>
      <div className="flex min-h-0 flex-1 flex-col border-2 border-t-2 border-[#c8c7d3]">
        <div className="flex h-[34px] shrink-0 bg-[#f7f7f7] px-0.5 pt-[3px]">
          <div className="flex h-[21px] flex-1 items-center bg-[#e3e3e3] pl-1 pr-1 text-[#7a7a7a]">
            <span className="flex opacity-60 grayscale"><Icon n="dStatic" size="size-4" /></span>
            <Select label="Analysis" value="Static Analysis" className="ml-1" />
            <Chev c="#aaa" />
          </div>
          <span className="ml-px flex gap-px"><Step dir="l" gray c="#444" /><Step dir="r" gray c="#444" /></span>
        </div>
        <div className="bg-white"><Tree rows={TREE} /></div>
        <div className="flex-1 bg-white" />
        <div className="h-[5px] shrink-0 bg-[#f7f7f7]" />
        <div className="h-[328px] shrink-0 bg-white"><Tree rows={TREE2} /></div>
        <IconTabs icons={["proj", "eye", "video", "flow"]} active={3} />
      </div>
    </aside>
  );
}

/* ---------- 3D viewport ---------- */
const SLAB = "M46 355 298 240 526 136 687 64 811 95 835 148 Q885 143 936 126L1060 155 1527 269 1289 377 887 559 537 470 264 407Z";
const P = ({ d, f, s = "#554a00" }) => <path d={d} fill={f} stroke={s} strokeWidth=".7" vectorEffect="non-scaling-stroke" />;
const OR = "#ffa800", RE = "#ff0000", YE = "#ffff00", GR = "#00f000";
const COLS = [
  [522, 552, 460, 775], [750, 781, 520, 672], [771, 801, 525, 835], [980, 1002, 500, 570],
  [999, 1030, 480, 733], [1117, 1147, 430, 507], [1230, 1260, 380, 630], [1366, 1396, 325, 567],
];
const NODES = [
  [46, 355], [298, 240], [526, 136], [687, 64], [811, 95], [835, 148], [936, 126], [1060, 155], [1527, 269], [887, 559],
  [264, 407], [46, 672], [264, 723], [298, 557], [744, 190], [515, 293], [765, 354], [1131, 188], [993, 251], [1381, 248],
  [1243, 311], [1015, 413], [537, 457], [786, 517],
];
function Model() {
  return (
    <svg viewBox="0 0 680 300" className="absolute left-[203px] top-[193px] h-[300px] w-[680px]" role="img" aria-label="Slab on columns with bending moments">
      <defs><clipPath id="slab"><path d={SLAB} /></clipPath></defs>
      <g transform="scale(.43367 .33333)">
        <P d="M264 407 298 414V557L264 573Z" f="#cccc00" s="#888" />
        {COLS.map(([a, b, t, e]) => (
          <g key={a}>
            <rect x={a} y={t} width={b - a} height={e - t} rx="3" fill="#a3a3a3" />
            <rect x={a + 12} y={t} width="6" height={e - t - 4} fill="#b0b0b0" />
            <rect x={b - 7} y={t} width="7" height={e - t - 4} fill="#9b9b9b" />
            <ellipse cx={(a + b) / 2} cy={e - 2} rx="8" ry="4" fill="#c85a5a" />
          </g>
        ))}
        {[[786, 838], [1014, 735], [1243, 633], [1381, 570]].map(([x, y]) => (
          <path key={x} d={`M${x} ${y - 2}l8 10-3 3 8 9h-26l8-9-3-3Z`} fill="#22c83a" />
        ))}
        <P d="M46 355 264 407V723L46 672Z" f="#cfcf00" s="#777" />
        <P d="M52 358 264 407V420L190 393 105 402 60 396Z" f={OR} />
        <path d="M56 375V660L254 706V415Z" fill="none" stroke="#999" strokeWidth="1" strokeDasharray="7 4" vectorEffect="non-scaling-stroke" />
        <g clipPath="url(#slab)">
          <path d={SLAB} fill="#cfcf00" />
          <P f={OR} d="M622 118 Q640 85 712 72L811 95 826 124 Q790 120 783 135 Q800 145 832 142L936 120 1060 150 1105 180 Q1100 197 1180 198L1240 198 1325 222 Q1322 240 1385 260 Q1440 265 1465 262L1560 262 1420 325 Q1340 310 1280 290 Q1180 285 1105 250 Q1050 235 1000 235 Q930 225 900 200 Q850 172 795 167 Q770 140 720 132Z" />
          <P f={OR} d="M500 146 Q560 152 600 163 Q660 205 720 220 Q830 232 862 243 Q878 258 850 265 Q960 255 1080 275 Q1130 295 1170 318 Q1240 345 1340 358L1225 410 Q1150 400 1080 378 Q950 370 890 350 Q860 335 800 312 Q700 312 650 294L600 268 Q590 252 540 250 Q480 252 440 245L330 227 400 185Z" />
          <P f={OR} d="M40 355 150 305 Q230 275 300 285 Q420 310 540 316 Q620 325 660 350 Q740 385 860 388 Q920 430 1020 440L1090 465 880 570 Q840 550 835 530 Q780 505 700 495 Q620 465 560 458 Q520 445 440 450L60 385Z" />
          <P f="#cfcf00" d="M430 443 Q500 440 560 452 Q590 465 575 480L537 475Z" />
          <P f="#cfcf00" d="M735 515 Q770 500 820 515 Q845 530 850 555L750 530Z" />
          <P f={RE} d="M380 205 470 155 Q510 160 520 175L572 210 Q575 225 555 223 Q500 210 470 214Z" />
          <P f={RE} d="M180 352 Q175 330 240 313 Q330 305 420 320 Q520 340 600 350 Q640 365 690 384 Q800 400 910 425L1075 480 920 548 Q860 525 780 510 Q690 495 650 468 Q620 435 480 418 Q360 400 280 388 Q190 378 180 352Z" />
          <P f="#b80000" d="M683 430 Q760 425 850 440 Q960 455 1000 475L1045 487 985 530 Q860 510 770 485 Q720 465 683 430Z" />
          <P f={RE} d="M820 290 Q840 278 885 290 Q930 285 1050 305L1300 378 1255 402 Q1130 385 1060 368 Q960 345 890 305 Q840 302 820 290Z" />
          <P f={RE} d="M828 150 Q880 150 936 122 Q985 140 1000 172 Q980 190 920 178 Q860 175 828 150Z" />
          <P f="#b80000" d="M835 148 Q885 143 918 135L915 150 Q870 165 835 148Z" />
          <P f={YE} d="M520 134 540 132 542 140 526 143Z" />
          <P f={YE} d="M658 180 Q670 160 730 162 Q800 165 833 195 Q835 215 780 214 Q690 210 658 180Z" />
          <P f={GR} d="M690 185 Q710 170 750 171 Q800 178 802 197 Q780 210 740 206 Q710 203 690 185Z" />
          <P f="#00e08c" d="M708 187 Q735 175 765 185 Q780 192 765 200 Q725 202 708 187Z" />
          <P f={YE} d="M290 238 Q340 220 400 240 Q480 262 550 268 Q605 285 608 303 Q590 325 520 318 Q420 310 290 238Z" />
          <P f={GR} d="M296 238 Q340 230 400 250 Q480 272 530 276 Q565 285 566 298 Q540 312 490 308 Q400 300 296 238Z" />
          <P f="#00e08c" d="M300 240 Q360 245 420 265 Q490 280 525 285 Q545 293 525 300 Q480 302 430 285 Q360 265 300 240Z" />
          <path d="M300 240 515 293" stroke="#222" strokeWidth="1" strokeDasharray="3 2" vectorEffect="non-scaling-stroke" />
          <P f={YE} d="M708 352 Q720 335 770 338 Q825 345 834 360 Q820 378 770 373 Q720 370 708 352Z" />
          <P f={GR} d="M745 352 Q765 342 789 354 Q770 367 745 352Z" />
          <P f={YE} d="M887 385 Q920 372 1020 383 Q1100 390 1130 415L1215 412 1060 475 Q980 440 930 430 Q890 405 887 385Z" />
          <P f="#cfcf00" d="M1122 408 1230 405 1145 446Z" s="none" />
          <P f={GR} d="M928 403 Q940 385 1010 390 Q1090 400 1120 425 Q1145 445 1130 446 Q1030 445 970 432 Q930 415 928 403Z" />
          <P f="#00e0b0" d="M948 407 Q970 390 1020 394 Q1080 403 1088 425 Q1060 440 1000 430 Q955 420 948 407Z" />
          <P f="#18a8ff" d="M966 408 Q985 395 1030 400 Q1070 412 1062 424 Q1020 434 985 425Z" />
          <P f="#1020d0" d="M985 411 Q1000 399 1030 405 Q1050 415 1035 424 Q1000 430 985 411Z" />
          <P f={YE} d="M1163 292 Q1200 283 1260 290 Q1330 300 1342 325 Q1320 342 1260 332 Q1180 322 1163 292Z" />
          <P f={GR} d="M1187 303 Q1200 290 1240 294 Q1295 302 1305 323 Q1280 335 1230 326 Q1195 320 1187 303Z" />
          <P f="#00e0b0" d="M1203 306 Q1225 296 1250 300 Q1285 308 1283 320 Q1260 328 1225 320Z" />
          <P f="#18a8ff" d="M1220 309 Q1240 300 1262 307 Q1270 316 1250 320 Q1225 320 1220 309Z" />
          <P f="#cfcf00" d="M1100 178 1131 172 1180 192 Q1150 205 1110 190Z" />
        </g>
        <g fill="none">
          <path d="M125 350 698 90 765 105 792 166 945 147 1465 268 885 535 125 350" stroke="#999" strokeWidth="1" strokeDasharray="8 4" vectorEffect="non-scaling-stroke" />
          <path d="M298 240 46 355M687 64 811 95 835 148M687 64 298 240M936 126 1527 269" stroke="#888" strokeWidth=".8" vectorEffect="non-scaling-stroke" />
          <path d="M264 407 744 190M537 457 1131 188" stroke="#333" strokeWidth="1" vectorEffect="non-scaling-stroke" />
          <path d="M46 355 887 559 1527 269" stroke="#000" strokeWidth="1.200" vectorEffect="non-scaling-stroke" />
          <path d="M264 407V723" stroke="#555" strokeWidth="1.200" vectorEffect="non-scaling-stroke" />
        </g>
        {[[1015, 413], [1243, 311]].map(([x, y]) => <ellipse key={x} cx={x} cy={y} rx="13" ry="8" fill="none" stroke="#111" strokeWidth="5" strokeDasharray="7 3" />)}
        {NODES.map(([x, y], i) => <ellipse key={i} cx={x} cy={y} rx="5" ry="5" fill={i < 14 ? "#f11" : "#e04040"} />)}
        <path d="M804 84 818 102M820 84 806 100" stroke="#444" strokeWidth="1.500" />
        <path d="M603 705 612 718 574 768 584 772 554 782 562 740 567 756Z" fill="#ff5a00" />
        <ellipse cx="545" cy="793" rx="9.500" ry="12" fill="#ff5a00" />
      </g>
    </svg>
  );
}

const ViewCube = () => (
  <svg viewBox="0 0 495 450" className="absolute right-[18px] top-[23px] h-[150px] w-[165px]" role="img" aria-label="View cube">
    <path d="M38 95 217 31 460 78 282 140Z" fill="#606060" />
    <path d="M155 92 240 62 350 85 268 112Z" fill="#747474" />
    <path d="M38 95 282 140V430L38 384Z" fill="#b4b4b4" />
    <path d="M282 140 460 78V368L282 430Z" fill="#929292" />
    <g fill="none" stroke="#1c1c1c" strokeWidth="4">
      <path d="M38 95 217 31 460 78 282 140ZM38 95V384L282 430V140M282 430 460 368V78" strokeWidth="3" />
      <path d="M99 106V394M219 128V418M38 168 282 213 460 152M38 314 282 357 460 298M327 124V412M416 93V382" strokeWidth="5" />
      <path d="M99 106 272 42M219 128 395 66M84 78 327 124M178 47 416 93" />
    </g>
    <text x="124" y="290" fontSize="60" fontWeight="bold" fill="#00e020" fontFamily="Liberation Sans, sans-serif">+Y</text>
    <text x="338" y="286" fontSize="56" fontWeight="bold" fill="#e81010" fontFamily="Liberation Sans, sans-serif" transform="rotate(-9 338 286)">+X</text>
    <text x="214" y="94" fontSize="30" fontWeight="bold" fill="#1c1ca0" fontFamily="Liberation Sans, sans-serif" transform="rotate(8 214 94)">Z -</text>
  </svg>
);

function Viewport() {
  return (
    <section className="relative flex min-w-0 flex-1 flex-col justify-between overflow-hidden bg-white pb-0.5 pl-[5px] pt-1">
      <Model />
      <ViewCube />
      <div className="relative leading-[17px] text-[#111]">
        <p>Visibility mode</p>
        <p>LC1 - Self Weight</p>
        <p>Static Analysis</p>
        <p>Moments m<span className="relative top-[3px]">y</span> [kipft/ft]</p>
      </div>
      <p className="relative leading-[17px] text-[#111]">max m<span className="relative top-[3px]">y</span> : 2.7297 | min m<span className="relative top-[3px]">y</span> : -7.1321 kipft/ft</p>
    </section>
  );
}

/* ---------- control panel ---------- */
const FACTORS = [
  ["General", [["Deformations", "514.49"]]],
  ["By Node", [["Reaction Forces", "1.00"], ["Reaction Moments", "1.00"], ["Distribution of Forces", "1.00"], ["Distribution of Moments", "1.00"]]],
  ["By Line", [["Release Deformations", "1.00"], ["Release Forces", "1.00"], ["Release Moments", "1.00"], ["Release Resultants", "1.00"]]],
  ["By Member", [["Deformations", "1.00"], ["Internal Forces", "1.00"], ["Internal Moments", "1.00"], ["Strains", "1.00"]]],
  ["By Surface", [["Deformations", "0.00"], ["Internal Forces", "0.00"], ["Internal Moments", "0.00", true], ["Stresses", "0.00"], ["Strains", "0.00"], ["Contact Stresses", "0.00"], ["Trajectories", "1.00"], ["Isotropic Characteristics", "0.00"], ["Distribution of Loads", "0.00"]]],
];
function ControlPanel() {
  return (
    <aside className="flex w-[267px] shrink-0 flex-col">
      <PanelTitle>Control Panel</PanelTitle>
      <div className="flex min-h-0 flex-1 flex-col border-l border-t border-[#c4c4d0] bg-white">
        <div className="px-2.5 pb-[11px] pt-[5px] leading-[13px]">
          <p>Display Factors</p>
          <p>Results</p>
        </div>
        <div className="flex min-h-0 flex-1 flex-col bg-[linear-gradient(90deg,#e0e0e0_19px,transparent_19px)]">
          {FACTORS.map(([g, rows]) => (
            <div key={g} className="pb-4 leading-4">
              <div className="flex h-4 items-center bg-[#e0e0e0] pl-[5px]">
                <button type="button" aria-label={`Collapse ${g}`} className="size-[9px] border border-[#888] bg-white"><span className="mx-auto block h-px w-[5px] bg-[#444]" /></button>
                <span className="mr-px w-2 border-t border-dotted border-[#aaa]" />
                <h3>{g}</h3>
              </div>
              {rows.map(([l, v, mark]) => (
                <div key={l} className="ml-[19px] flex h-4 bg-[#fafbf5]">
                  <span className="ml-2.5 h-2 w-3 shrink-0 border-b border-l border-dotted border-[#aaa]" />
                  <span className="w-[134px] shrink-0 whitespace-nowrap pl-0.5">{l}</span>
                  <span className="flex-1 border-x border-[#e0e0e0] bg-white pr-0.5 text-right">{v}</span>
                  <span className="flex w-6 items-center pl-2">{mark && <svg viewBox="0 0 6 8" className="h-2 w-1.5"><path d="M6 0V8L0 4Z" fill="red" /></svg>}</span>
                </div>
              ))}
            </div>
          ))}
        </div>
      </div>
      <div className="h-[26px] border-t border-[#c4c4d0]"><IconTabs icons={["legend", "scale", "probe"]} active={1} /></div>
    </aside>
  );
}

/* ---------- results table ---------- */
// point, X, Y, |u|, phiX, phiY, bar widths: |u|, uY, uZ, phiX, phiY, phiZ
const ROWS = [
  ["", "", "4.92", "0.01", "-0.4", "-0.1", 10, 0, 8, -14, -4, 0],
  ["", "", "4.92", "0.01", "-0.4", "-0.1", 11, 0, 9, -15, -3, 0],
  ["", "", "4.92", "0.02", "-0.4", "-0.1", 12, 0, 10, -15, -3, 1],
  ["", "", "4.92", "0.02", "-0.4", "-0.1", 14, 0, 12, -13, -5, 1],
  [65, "34.45", "4.92", "0.02", "-0.3", "-0.2", 17, 1, 15, -12, -8, 2],
  [66, "36.09", "4.92", "0.03", "-0.2", "-0.3", 21, 1, 17, -8, -14, 2],
  [67, "37.73", "4.92", "0.03", "-0.2", "-0.4", 27, 1, 22, -6, -17, 3],
  [68, "39.37", "4.92", "0.04", "-0.1", "-0.5", 35, 2, 28, -3, -20, 5],
  [69, "13.12", "6.56", "0.02", "-0.4", "0.2", 19, 0, 15, -14, 9, 0],
  [70, "14.76", "6.56", "0.02", "-0.3", "0.3", 15, 0, 12, -12, 10, 0],
  [71, "16.40", "6.56", "0.01", "-0.2", "0.2", 11, 0, 9, -10, 9, 0],
  [72, "18.04", "6.56", "0.01", "-0.2", "0.2", 7, 0, 6, -7, 8, 0],
  [73, "19.69", "6.56", "0.01", "-0.1", "0.1", 5, 0, 4, -5, 5, 0],
  [74, "21.33", "6.56", "0.00", "-0.1", "0.1", 3, 0, 3, -4, 2, 0],
  [75, "22.97", "6.56", "0.00", "-0.1", "0.0", 3, 0, 2, -4, 0, 0],
  [76, "24.61", "6.56", "0.00", "-0.1", "0.0", 3, 0, 3, -5, -2, 0],
  [77, "26.25", "6.56", "0.01", "-0.2", "0.1", 4, 0, 4, -6, -3, 0],
];
const BarCell = ({ v, base, w, pad = "pr-[15px]" }) => (
  <td className={`relative border-b border-r border-[#e0e0e0] text-right ${pad}`}>
    <span className="absolute top-[2px] h-[11px] w-px bg-[#b0b0b0]" style={{ left: base }} />
    {w !== 0 && <span className={`absolute top-[2px] h-[11px] ${w > 0 ? "bg-[#ffc0c2]" : "bg-[#d9e5ff]"}`} style={{ left: w > 0 ? base + 1 : base + w, width: Math.abs(w) }} />}
    <span className="relative">{v}</span>
  </td>
);
const Sub = ({ a, b }) => <>{a}<span className="text-[9px]">{b}</span></>;
const HEAD = "border-r border-[#c8c8c8] pb-1 font-normal leading-3";

function ResultsTable() {
  return (
    <table className="w-full table-fixed border-separate border-spacing-0 leading-[15px]">
      <colgroup>
        <col className="w-[61px]" /><col className="w-[60px]" /><col className="w-20" /><col className="w-20" /><col className="w-20" /><col className="w-[85px]" />
        <col className="w-[85px]" /><col className="w-[85px]" /><col className="w-[85px]" /><col className="w-[85px]" />
        <col className="w-[85px]" /><col className="w-[85px]" /><col className="w-[85px]" /><col />
      </colgroup>
      <thead className="bg-[#efefef]">
        <tr className="h-[9px] bg-[#e0e0e0]" aria-hidden="true">
          {Array.from({ length: 14 }, (_, i) => <td key={i} className="h-[9px] border-b border-r border-white" />)}
        </tr>
        <tr className="h-4">
          <th rowSpan={2} className="bg-[#e0e0e0]" /><th rowSpan={2} className={HEAD} />
          <th colSpan={3} className={`${HEAD} pl-5`}>Point Coordinates [ft]</th>
          <th rowSpan={2} className={HEAD} />
          <th colSpan={4} className={HEAD}>Displacements [in]</th>
          <th colSpan={3} className={HEAD}>Rotations [mrad]</th>
          <th rowSpan={2} className={`${HEAD} pt-4`}>Surface Comment</th>
        </tr>
        <tr className="h-4">
          <th className={HEAD}>X</th><th className={HEAD}>Y</th><th className={HEAD}>Z</th>
          <th className={HEAD}>|u|</th><th className={HEAD}><Sub a="u" b="X" /></th><th className={HEAD}><Sub a="u" b="Y" /></th><th className={HEAD}><Sub a="u" b="Z" /></th>
          <th className={HEAD}><Sub a="φ" b="X" /></th><th className={HEAD}><Sub a="φ" b="Y" /></th><th className={HEAD}><Sub a="φ" b="Z" /></th>
        </tr>
      </thead>
      <tbody>
        {ROWS.map((r, i) => (
          <tr key={i} className={`h-4 ${i % 2 ? "bg-[#fffdf4]" : "bg-[#fff8e4]"}`}>
            <td className="bg-[#e0e0e0]" />
            <td className="border-b border-r border-[#e0e0e0] text-center">{r[0]}</td>
            <td className="border-b border-r border-[#e0e0e0] pr-[3px] text-right">{r[1]}</td>
            <td className="border-b border-r border-[#e0e0e0] pr-[3px] text-right">{r[2]}</td>
            <td className="border-b border-r border-[#e0e0e0] pr-[3px] text-right">0.00</td>
            <td className="border-b border-r border-[#e0e0e0]" />
            <BarCell v={r[3]} base={5} w={r[6]} pad="pr-[3px]" />
            <BarCell v="0.00" base={50} w={0} />
            <BarCell v="0.00" base={19} w={r[7]} />
            <BarCell v={r[3]} base={8} w={r[8]} />
            <BarCell v={r[4]} base={45} w={r[9]} />
            <BarCell v={r[5]} base={39} w={r[10]} />
            <BarCell v="0.0" base={43} w={r[11]} />
            <td className="border-b border-r border-[#e0e0e0]" />
          </tr>
        ))}
      </tbody>
    </table>
  );
}

const OPTIONS = [
  ["dStruct", "Structure"], ["dImp", "Imperfections"], ["dCases", "Load Cases & Combinations"], ["dWiz", "Load Wizards"],
  ["dLoads", "Loads"], ["dStatic", "Static Analysis"], ["dConc", "Concrete Design"],
];
const OPT_BG = ["bg-[#0078d7] text-white", "", "", "", "", "bg-[#f1f1f1]", "bg-[#f5fffe]"];
const TABS = ["Global Deformations", "Local Deformations", "Basic Internal Forces", "Principal Internal Forces", "Design Internal Forces", "Basic Stresses", "Principal Stresses", "Other Stresses", "Equivalent Stresses - von Mises", "Equivalent Stresses"];

function TablePanel() {
  return (
    <section className="relative flex shrink-0 flex-col">
      <PanelTitle>Surfaces | Global Deformations</PanelTitle>
      <nav className="flex h-5 items-center">
        {["Go To", "Edit", "Selection", "View", "Settings"].map((m) => <button key={m} type="button" className="px-2 pt-0.5">{m}</button>)}
      </nav>
      <div className="flex h-7 items-center overflow-hidden">
        <button type="button" aria-haspopup="listbox" aria-expanded="true" className="ml-1 flex h-[21px] w-[198px] shrink-0 items-center bg-[#cce4f7] px-[3px] text-left">
          <Icon n="dStatic" size="size-3.5" />
          <span className="ml-[5px] flex-1">Static Analysis</span>
          <Chev />
        </button>
        <span className="ml-px flex gap-px"><Step dir="l" gray c="#555" /><Step dir="r" /></span>
        <span className="ml-[3px] flex h-full items-center"><Sep /><span className="mr-[3px] h-full w-px bg-[#dcdcdc]" /></span>
        <div className="flex h-[21px] w-[268px] shrink-0 items-center bg-[#e8e7f2] pl-1 pr-1">
          <Icon n="surf" size="size-3.5" />
          <Select label="Result table" value="Results by Surface" className="ml-1" />
          <Chev />
        </div>
        <span className="ml-px flex gap-px"><Step dir="l" /><Step dir="r" gray c="#555" /></span>
        <Sep wide />
        <CaseCombo /><Step dir="l" gray c="#555" /><Step dir="r" />
        {renderItems("|| jumpA* jumpB || resEye* resX* | tbl tblN tblN || bars* | xls / filtW | dec")}
        <span className="h-full w-px bg-[#dcdcdc]" />
      </div>
      <div className="flex h-[308px] border-t-2 border-[#c8c7d3]">
        <div className="min-w-0 flex-1 overflow-hidden"><ResultsTable /></div>
        <div className="flex w-[18px] flex-col items-center justify-between bg-[#f2f2f2] py-2">
          <svg viewBox="0 0 8 6" className="h-1.5 w-2"><path d="M1 5 4 1.500 7 5" fill="none" stroke="#444" strokeWidth="1.800" /></svg>
          <span className="mb-auto mt-2 h-[18px] w-[15px] bg-[#cdcdcd]" />
          <svg viewBox="0 0 8 6" className="h-1.5 w-2"><path d="M1 1 4 4.500 7 1" fill="none" stroke="#444" strokeWidth="1.800" /></svg>
        </div>
      </div>
      <div className="flex h-[25px] items-start border-t border-[#c8c7d3]">
        <div className="flex h-[23px] w-[125px] shrink-0 items-center justify-between pl-1 pr-1">
          <button type="button" aria-label="First"><svg viewBox="0 0 8 8" className="size-2"><path d="M1 0V8M8 0V8L3 4Z" fill="#888" stroke="#888" /></svg></button>
          <button type="button" aria-label="Previous page"><Tick dir="l" c="#888" /></button>
          <span className="px-1">1 of 20</span>
          <button type="button" aria-label="Next page"><Tick dir="r" c="#444" /></button>
          <button type="button" aria-label="Last"><svg viewBox="0 0 8 8" className="size-2"><path d="M7 0V8M0 0V8L5 4Z" fill="#444" stroke="#444" /></svg></button>
        </div>
        <div className="flex min-w-0 flex-1 items-start overflow-hidden">
          {TABS.map((t, i) => (
            <button key={t} type="button" className={`shrink-0 whitespace-nowrap border border-[#c8c7d3] ${i ? "h-[21px] border-t-transparent bg-[#ececec] pl-1.5 pr-[7px]" : "h-[23px] border-t-white bg-white px-2"}`}>{t}</button>
          ))}
        </div>
        <div className="flex h-[21px] shrink-0 items-center gap-2 pl-0.5 pr-1">
          <button type="button" aria-label="Scroll tabs left"><svg viewBox="0 0 6 10" className="h-2.5 w-1.5"><path d="M6 0V10L0 5Z" fill="#aaa" /></svg></button>
          <button type="button" aria-label="Scroll tabs right"><svg viewBox="0 0 6 10" className="h-2.5 w-1.5"><path d="M0 0V10L6 5Z" fill="#000" /></svg></button>
        </div>
      </div>
      {/* opened drop-down list with its highlight frame */}
      <div className="pointer-events-none absolute -left-0.5 top-[37px] h-[146px] w-[214px] border-[6px] border-[#82d13c]" />
      <ul role="listbox" className="absolute left-1 top-16 w-[197px] border-b border-[#777] bg-white shadow-[2px_2px_1px_#888]">
        {OPTIONS.map(([n, t], i) => (
          <li key={t} role="option" aria-selected={i === 0} className={`flex h-4 items-center gap-[5px] pl-[3px] leading-4 ${OPT_BG[i]}`}>
            <Icon n={n} size="size-3.5" />{t}
          </li>
        ))}
      </ul>
    </section>
  );
}

/* ---------- status bar ---------- */
const CELL = "flex h-5 shrink-0 items-center border-l border-[#dcdcdc] pl-1";
const StatusBar = () => (
  <footer className="flex h-[21px] shrink-0 items-center">
    <span className="min-w-0 flex-1" />
    <button type="button" className="h-[19px] w-8 border border-[#bbb] bg-[#ececec]">SNAP</button>
    <button type="button" className="w-[43px]">GRID</button>
    <button type="button" className="w-9">LGRID</button>
    <button type="button" className="ml-1 h-[19px] w-11 border border-[#bbb] bg-[#ececec]">OSNAP</button>
    <span className={`${CELL} w-[89px] whitespace-nowrap`}>Visibility mode</span>
    <span className={`${CELL} w-[105px]`} />
    <span className={`${CELL} w-[156px]`}>CS: Global XYZ</span>
    <span className={`${CELL} w-[66px]`}>Plane: XY</span>
    <span className={`${CELL} w-[76px]`} />
    <span className={`${CELL} w-[76px]`} />
    <span className={`${CELL} w-[76px]`} />
    <span className={`${CELL} w-[19px] items-end`}>
      <svg viewBox="0 0 9 9" className="size-[9px]"><path d="M6 1h2M3 4h2M6 4h2M0 7h2M3 7h2M6 7h2" stroke="#aaa" strokeWidth="2" /></svg>
    </span>
  </footer>
);

export default function App() {
  return (
    <div className="flex h-screen w-full flex-col overflow-hidden border border-[#6b6b6b] bg-[#f7f7f7] font-['Open_Sans',sans-serif] text-[11px] text-black">
      <header className="flex h-[30px] shrink-0 items-center bg-white pl-[7px]">
        <Icon n="logo" size="size-[18px]" />
        <h1 className="ml-1 flex-1">Dlubal RFEM | 6.01.0007 | Load distribution.rf6</h1>
        <button type="button" aria-label="Minimize" className="flex w-[45px] justify-center"><svg viewBox="0 0 11 11" className="size-[11px]"><path d="M0 5.500H11" stroke="#000" /></svg></button>
        <button type="button" aria-label="Maximize" className="flex w-[45px] justify-center"><svg viewBox="0 0 11 11" className="size-[11px]"><path d="M.5.500H10.500V10.500H.5Z" fill="none" stroke="#000" /></svg></button>
        <button type="button" aria-label="Close" className="flex w-[46px] justify-center"><svg viewBox="0 0 11 11" className="size-[11px]"><path d="M.5.500 10.500 10.500M10.500.500.500 10.500" stroke="#000" strokeWidth="1.200" /></svg></button>
      </header>
      <nav className="flex h-5 shrink-0 items-center">
        <svg viewBox="0 0 16 13" className="h-[13px] w-4"><rect width="16" height="13" fill="#1f2f6e" /><path d="M0 7 6 2 14 7M0 9H16M5 3V12" stroke="#dde" fill="none" /></svg>
        {MENU.map((m) => <button key={m} type="button" className="px-2">{m}</button>)}
        <span className="ml-auto mr-2">Online License 19 | Jannik Dunz | Dlubal Software GmbH</span>
        {["M1 8H6", "M3 3V1H8V5H7M1 4H6V8H1Z", "M1 1 8 8M8 1 1 8"].map((d) => (
          <button key={d} type="button" aria-label="Document window" className="mr-px flex h-[17px] w-[17px] items-center justify-center border border-[#ddd] bg-white">
            <svg viewBox="0 0 9 9" className="size-[9px]"><path d={d} fill="none" stroke="#667788" strokeWidth="1.600" /></svg>
          </button>
        ))}
      </nav>
      <Toolbar items={TB1} wide />
      <Toolbar items={TB2} />
      <main className="flex min-h-0 flex-1 pl-px">
        <Navigator />
        <div className="ml-1 flex min-w-0 flex-1 flex-col gap-1">
          <div className="flex min-h-0 flex-1 gap-1">
            <Viewport />
            <ControlPanel />
          </div>
          <TablePanel />
        </div>
      </main>
      <StatusBar />
    </div>
  );
}
